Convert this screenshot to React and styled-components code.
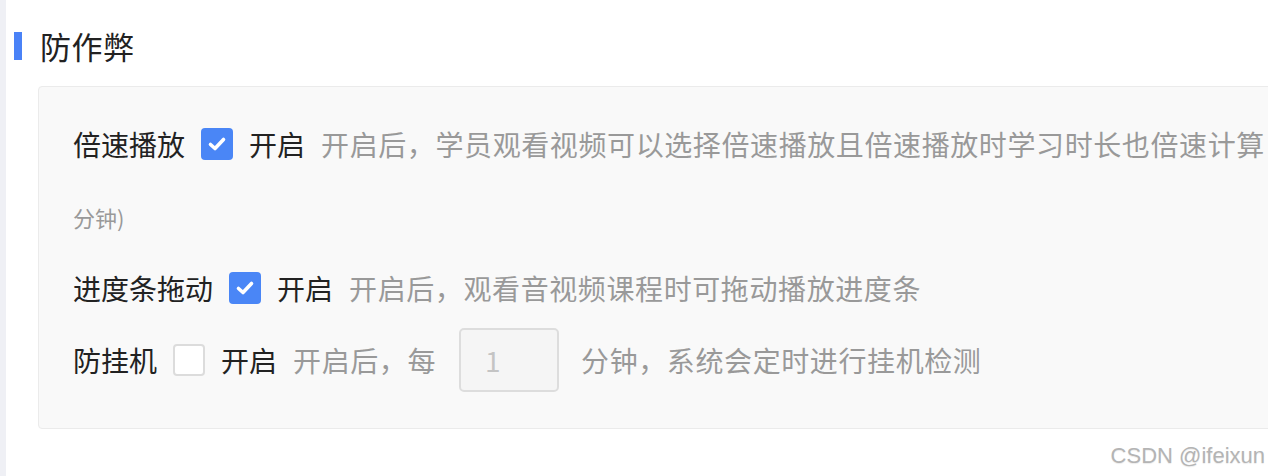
import React from "react";
import styled, { createGlobalStyle } from "styled-components";

const GlobalStyle = createGlobalStyle`
  html, body {
    margin: 0;
    padding: 0;
    background: #ffffff;
    font-family: "Noto Sans CJK SC", "Noto Sans", sans-serif;
  }
  body {
    width: 1268px;
    height: 476px;
    overflow: hidden;
  }
`;

const Page = styled.div`
  position: relative;
  display: flex;
  width: 1268px;
  height: 476px;
  overflow: hidden;
`;

const SideStrip = styled.div`
  width: 6px;
  flex-shrink: 0;
  background: #eff0f5;
`;

const Main = styled.div`
  flex: 1;
  padding-left: 8px;
  min-width: 0;
`;

const Heading = styled.div`
  display: flex;
  align-items: center;
  gap: 18px;
  height: 28px;
  margin-top: 32px;
`;

const HeadingBar = styled.span`
  width: 8px;
  height: 28px;
  background: #4a82f7;
`;

const HeadingText = styled.h2`
  margin: 0;
  font-size: 31px;
  font-weight: 400;
  color: #222;
  line-height: 28px;
  letter-spacing: 0.5px;
`;

const Panel = styled.div`
  margin-top: 26px;
  margin-left: 24px;
  width: 1300px;
  box-sizing: border-box;
  padding: 33px 34px 36px;
  background: #f9f9f9;
  border: 1px solid #ebebeb;
  border-radius: 4px;
`;

const Row = styled.div`
  display: flex;
  align-items: center;
  gap: 16px;
  height: ${(p) => p.$h || 48}px;
  margin-top: ${(p) => p.$mt || 0}px;
  white-space: nowrap;
`;

const Label = styled.span`
  font-size: 28px;
  color: #222;
`;

const On = styled.span`
  font-size: 28px;
  color: #222;
`;

const Desc = styled.span`
  font-size: 28px;
  color: #999;
  letter-spacing: 0.6px;
`;

const Hint = styled.div`
  font-size: 22px;
  color: #999;
  height: 48px;
  line-height: 48px;
  margin-top: 25px;
`;

const Box = styled.span`
  width: 32px;
  height: 32px;
  box-sizing: border-box;
  border-radius: 4px;
  display: flex;
  align-items: center;
  justify-content: center;
  flex-shrink: 0;
  background: ${(p) => (p.$checked ? "#4a86f6" : "#ffffff")};
  border: ${(p) => (p.$checked ? "none" : "2px solid #dcdcdc")};
`;

const MinuteInput = styled.div`
  width: 100px;
  height: 64px;
  box-sizing: border-box;
  margin: 0 6px 0 7px;
  padding-left: 24px;
  display: flex;
  align-items: center;
  background: #f5f5f5;
  border: 2px solid #dddddd;
  border-radius: 5px;
  font-size: 28px;
  color: #c4c4c4;
`;

const Watermark = styled.div`
  position: absolute;
  right: 3px;
  bottom: 7px;
  font-family: "Liberation Sans", Arial, sans-serif;
  font-size: 22px;
  color: #b4b4b4;
  text-shadow: 0 1px 1px rgba(0, 0, 0, 0.08);
`;

const Checkbox = ({ checked }) => (
  <Box $checked={checked}>
    {checked && (
      <svg width="22" height="22" viewBox="0 0 22 22">
        <polyline
          points="4.5,11.5 9,15.5 17.5,6.5"
          fill="none"
          stroke="#fff"
          strokeWidth="3.6"
          strokeLinecap="round"
          strokeLinejoin="round"
        />
      </svg>
    )}
  </Box>
);

export default function App() {
  return (
    <>
      <GlobalStyle />
      <Page>
        <SideStrip />
        <Main>
          <Heading>
            <HeadingBar />
            <HeadingText>防作弊</HeadingText>
          </Heading>
          <Panel>
            <Row>
              <Label>倍速播放</Label>
              <Checkbox checked />
              <On>开启</On>
              <Desc>开启后，学员观看视频可以选择倍速播放且倍速播放时学习时长也倍速计算</Desc>
            </Row>
            <Hint>分钟)</Hint>
            <Row $mt={23}>
              <Label>进度条拖动</Label>
              <Checkbox checked />
              <On>开启</On>
              <Desc>开启后，观看音视频课程时可拖动播放进度条</Desc>
            </Row>
            <Row $mt={16} $h={64}>
              <Label>防挂机</Label>
              <Checkbox />
              <On>开启</On>
              <Desc>开启后，每</Desc>
              <MinuteInput>1</MinuteInput>
              <Desc>分钟，系统会定时进行挂机检测</Desc>
            </Row>
          </Panel>
        </Main>
        <Watermark>CSDN @ifeixun</Watermark>
      </Page>
    </>
  );
}
